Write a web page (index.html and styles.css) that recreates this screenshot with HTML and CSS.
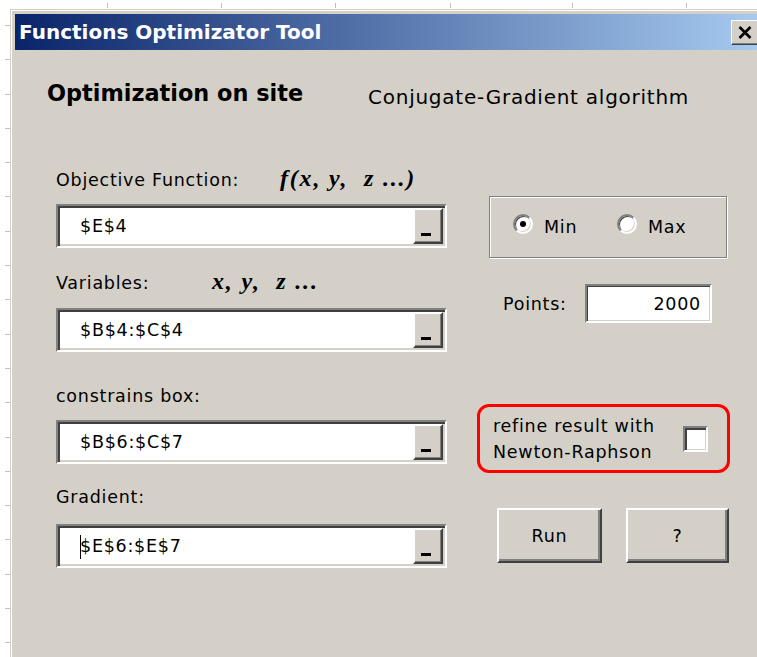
FILE: index.html
```html
<!DOCTYPE html>
<html lang="en">
<head>
<meta charset="utf-8">
<title>Functions Optimizator Tool</title>
<link rel="stylesheet" href="styles.css">
</head>
<body>
<div class="dialog">
  <div class="titlebar">
    <span class="title">Functions Optimizator Tool</span>
    <button class="close" type="button" aria-label="Close">
      <svg width="14" height="13" viewBox="0 0 14 13"><path d="M1.5 1 L12.5 12 M12.5 1 L1.5 12" stroke="#000" stroke-width="2.6" fill="none"/></svg>
    </button>
  </div>

  <div class="head">
    <h1 class="heading">Optimization on site</h1>
    <p class="algo">Conjugate-Gradient algorithm</p>
  </div>

  <div class="main">
    <div class="fields">
      <div class="label label-1"><span class="label-text lt-obj">Objective Function:</span><span class="math">f(x, y,&nbsp; z ...)</span></div>
      <div class="ref ref-1"><span class="ref-text">$E$4</span><span class="ref-btn"><i class="bar"></i></span></div>

      <div class="label label-2"><span class="label-text lt-var">Variables:</span><span class="math">x, y,&nbsp; z ...</span></div>
      <div class="ref ref-2"><span class="ref-text">$B$4:$C$4</span><span class="ref-btn"><i class="bar"></i></span></div>

      <div class="label label-3"><span class="label-text">constrains box:</span></div>
      <div class="ref ref-3"><span class="ref-text">$B$6:$C$7</span><span class="ref-btn"><i class="bar"></i></span></div>

      <div class="label label-4"><span class="label-text">Gradient:</span></div>
      <div class="ref ref-4"><span class="ref-text"><span class="caret"></span>$E$6:$E$7</span><span class="ref-btn"><i class="bar"></i></span></div>
    </div>

    <div class="side">
      <div class="minmax">
        <label class="opt opt-min"><span class="radio checked"></span>Min</label>
        <label class="opt"><span class="radio"></span>Max</label>
      </div>

      <div class="points">
        <span class="points-label">Points:</span>
        <span class="points-box">2000</span>
      </div>

      <div class="refine">
        <span class="refine-text">refine result with<br>Newton-Raphson</span>
        <span class="check"></span>
      </div>

      <div class="actions">
        <button class="btn btn-run" type="button">Run</button>
        <button class="btn btn-help" type="button">?</button>
      </div>
    </div>
  </div>
</div>
</body>
</html>
```

FILE: styles.css
```css
* {
  box-sizing: border-box;
}

html,
body {
  margin: 0;
  height: 100%;
}

/* worksheet behind the dialog: white, with row ticks on the left and column ticks on top */
body {
  overflow: hidden;
  font-family: "DejaVu Sans", "Liberation Sans", sans-serif;
  color: #000;
  background:
    linear-gradient(#bdbdbd, #bdbdbd) 107px 3px / 1px 5px no-repeat,
    linear-gradient(#bdbdbd, #bdbdbd) 221px 3px / 1px 5px no-repeat,
    linear-gradient(#bdbdbd, #bdbdbd) 335px 3px / 1px 5px no-repeat,
    linear-gradient(#bdbdbd, #bdbdbd) 450px 3px / 1px 5px no-repeat,
    linear-gradient(#bdbdbd, #bdbdbd) 572px 3px / 1px 5px no-repeat,
    linear-gradient(#bdbdbd, #bdbdbd) 686px 3px / 1px 5px no-repeat,
    repeating-linear-gradient(to bottom, transparent 0 25px, #c2c2c2 25px 26px, transparent 26px 34.3px) 5px 0 / 5px 100% no-repeat,
    #fff;
}

/* ---------- window frame ---------- */
.dialog {
  margin: 9px 0 0 10px;
  width: 750px;
  height: 660px;
  padding: 4px 0 0 4px;
  background: #d4d0c8;
  border-top: 1px solid #d4d0c8;
  border-left: 1px solid #d4d0c8;
  box-shadow: inset 1px 1px 0 #fff;
}

.titlebar {
  height: 36px;
  display: flex;
  align-items: center;
  padding-left: 4px;
  background: linear-gradient(to right, #0a246a, #a6caf0);
}

.title {
  flex: 1;
  color: #fff;
  font-weight: bold;
  font-size: 20px;
  white-space: nowrap;
}

.close {
  width: 28px;
  height: 25px;
  margin: 0 1px 0 0;
  padding: 0;
  display: flex;
  align-items: center;
  justify-content: center;
  background: #d4d0c8;
  border: 1px solid;
  border-color: #fff #404040 #404040 #fff;
  box-shadow: inset -1px -1px 0 #808080;
}

/* ---------- heading ---------- */
.head {
  display: grid;
  grid-template-columns: 321px auto;
  padding-left: 32px;
}

.heading {
  margin: 27.5px 0 0;
  font-size: 22.4px;
  line-height: 30px;
  font-weight: bold;
  white-space: nowrap;
}

.algo {
  margin: 32px 0 0;
  font-size: 20px;
  letter-spacing: 0.75px;
  line-height: 30px;
  white-space: nowrap;
}

/* ---------- two columns ---------- */
.main {
  display: flex;
  margin-top: 48px;
  padding-left: 41px;
}

.fields {
  width: 391px;
}

.side {
  width: 253px;
  margin-left: 30px;
}

/* ---------- labels and reference boxes ---------- */
.label {
  height: 24px;
  display: flex;
  align-items: center;
  font-size: 17.5px;
  letter-spacing: 0.75px;
  white-space: nowrap;
}

.label-1 { margin-top: 8px; }
.label-2 { margin-top: 23px; }
.label-3 { margin-top: 32px; }
.label-4 { margin-top: 21px; }

.lt-obj { width: 224px; flex: none; }
.lt-var { width: 156px; flex: none; }

.math {
  font-family: "Liberation Serif", "DejaVu Serif", serif;
  font-weight: bold;
  font-style: italic;
  font-size: 24px;
  letter-spacing: 1.8px;
  white-space: pre;
  margin-top: -3px;
}

.ref {
  height: 44px;
  display: flex;
  background: #fff;
  border: 2px solid;
  border-color: #808080 #fff #fff #808080;
  box-shadow: inset 2px 2px 0 #404040, inset -2px -2px 0 #d4d0c8;
  padding: 2px;
}

.ref-1 { margin-top: 12px; }
.ref-2 { margin-top: 13px; }
.ref-3 { margin-top: 12px; }
.ref-4 { margin-top: 15px; }

.ref-text {
  flex: 1;
  display: flex;
  align-items: center;
  padding-left: 20px;
  font-size: 17.5px;
  letter-spacing: 0.75px;
  position: relative;
}

/* text cursor sitting at the start of the Gradient box */
.caret {
  position: absolute;
  left: 20px;
  top: 7px;
  width: 1px;
  height: 24px;
  background: #000;
}

.ref-btn {
  width: 30px;
  display: flex;
  align-items: flex-end;
  justify-content: center;
  padding-bottom: 6px;
  background: #d4d0c8;
  border: 2px solid;
  border-color: #fff #404040 #404040 #fff;
  box-shadow: inset -1px -1px 0 #808080;
}

.bar {
  width: 10px;
  height: 3px;
  margin-right: 5px;
  background: #000;
}

/* ---------- Min / Max frame ---------- */
.minmax {
  margin: 36px 0 0 12px;
  width: 238px;
  height: 62px;
  display: flex;
  align-items: center;
  padding-left: 23px;
  border: 1px solid #808080;
  box-shadow: inset 1px 1px 0 #fff, 1px 1px 0 #fff;
  font-size: 17.5px;
  letter-spacing: 0.75px;
}

.opt {
  display: flex;
  align-items: center;
  gap: 11px;
}

.opt-min {
  width: 104px;
}

.radio {
  width: 20px;
  height: 20px;
  margin-top: -6px;
  border-radius: 50%;
  background: #fff;
  border: 2px solid;
  border-color: #808080 #fff #fff #808080;
  box-shadow: inset 1px 1px 0 #404040, inset -1px -1px 0 #d4d0c8;
  display: flex;
  align-items: center;
  justify-content: center;
}

.radio.checked::after {
  content: "";
  width: 6px;
  height: 6px;
  border-radius: 50%;
  background: #000;
}

/* ---------- Points ---------- */
.points {
  margin-top: 26px;
  display: grid;
  grid-template-columns: 82px 127px;
  align-items: center;
  padding-left: 26px;
  font-size: 17.5px;
  letter-spacing: 0.75px;
}

.points-box {
  height: 39px;
  display: flex;
  align-items: center;
  justify-content: flex-end;
  padding-right: 9px;
  background: #fff;
  border: 2px solid;
  border-color: #808080 #fff #fff #808080;
  box-shadow: inset 1px 1px 0 #404040, inset -1px -1px 0 #d4d0c8;
}

/* ---------- refine option ---------- */
.refine {
  margin-top: 81px;
  height: 69px;
  display: flex;
  align-items: center;
  padding-left: 13px;
  border: 3px solid #f00;
  border-radius: 12px;
  font-size: 17.5px;
  letter-spacing: 0.75px;
  line-height: 26px;
}

.check {
  width: 25px;
  height: 26px;
  margin: 0 19px 0 auto;
  background: #fff;
  border: 2px solid;
  border-color: #808080 #fff #fff #808080;
  box-shadow: inset 2px 2px 0 #404040, inset -1px -1px 0 #d4d0c8;
}

/* ---------- buttons ---------- */
.actions {
  margin-top: 35px;
  display: flex;
  gap: 24px;
  padding-left: 20px;
}

.btn {
  height: 55px;
  padding: 0;
  font-family: inherit;
  font-size: 17.5px;
  letter-spacing: 0.75px;
  color: #000;
  background: #d4d0c8;
  border: 2px solid;
  border-color: #fff #404040 #404040 #fff;
  box-shadow: inset -2px -2px 0 #808080;
}

.btn-run { width: 105px; }
.btn-help { width: 103px; }
```
